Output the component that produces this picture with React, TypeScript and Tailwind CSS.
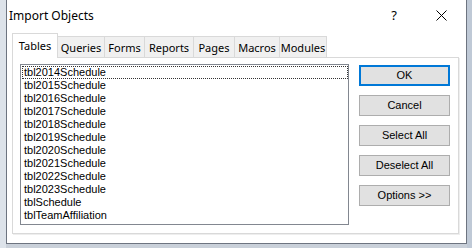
import React from 'react'

const tabs = ['Tables', 'Queries', 'Forms', 'Reports', 'Pages', 'Macros', 'Modules']
const tabWidths: Record<string, string> = {
  Queries: 'w-[48px]',
  Forms: 'w-[41px]',
  Reports: 'w-[50px]',
  Pages: 'w-[42px]',
  Macros: 'w-[46px]',
  Modules: 'w-[48px]',
}

const tables = [
  'tbl2014Schedule',
  'tbl2015Schedule',
  'tbl2016Schedule',
  'tbl2017Schedule',
  'tbl2018Schedule',
  'tbl2019Schedule',
  'tbl2020Schedule',
  'tbl2021Schedule',
  'tbl2022Schedule',
  'tbl2023Schedule',
  'tblSchedule',
  'tblTeamAffiliation',
]

const buttons = ['OK', 'Cancel', 'Select All', 'Deselect All', 'Options >>']

export default function App() {
  return (
    <div className="flex w-[472px] h-[248px] overflow-hidden bg-[#c9d0d9]">
      {/* strip of the window behind */}
      <div className="w-[6px] h-full bg-[#dde3ea]" />

      {/* dialog */}
      <div className="flex flex-col w-[461px] h-[244px] bg-white border-x border-b border-[#6d7480] font-['Noto_Sans',sans-serif] text-[#000]">
        {/* title bar */}
        <div className="flex items-center h-[31px] shrink-0">
          <span className="pl-[2px] text-[12px] leading-none">Import Objects</span>
          <span className="ml-auto mr-[39px] text-[13px] leading-none">?</span>
          <svg width="11" height="11" viewBox="0 0 11 11" className="mr-[19px]">
            <path d="M0.5 0.5 L10.5 10.5 M10.5 0.5 L0.5 10.5" stroke="#000" strokeWidth="1" />
          </svg>
        </div>

        <div className="pl-[5px]">
          {/* tab strip */}
          <div className="flex items-end h-[26px]">
            {tabs.map((t) =>
              t === 'Tables' ? (
                <div
                  key={t}
                  className="relative z-10 -mb-px flex items-center justify-center w-[46px] h-[25px] bg-white border-x border-t border-[#d9d9d9] text-[11px] leading-none pb-[2px]"
                >
                  {t}
                </div>
              ) : (
                <div
                  key={t}
                  className={`flex items-center justify-center ${tabWidths[t]} h-[21px] -ml-px first:ml-0 bg-[#f0f0f0] border border-b-0 border-[#d9d9d9] text-[11px] leading-none`}
                >
                  {t}
                </div>
              )
            )}
          </div>

          {/* tab panel */}
          <div className="flex w-[447px] h-[177px] border border-[#d9d9d9] pl-[7px] pt-[6px] shadow-[1px_1px_0_#eeeeee]">
            {/* list */}
            <div className="w-[329px] h-[161px] border border-[#828790] pt-[1px] pl-[1px] font-['Liberation_Sans',sans-serif] text-[11px]">
              {tables.map((name, i) => (
                <div
                  key={name}
                  className={`h-[13px] leading-[13px] pl-[2px] w-[326px] ${
                    i === 0 ? 'outline-1 outline-dotted outline-[#333] -outline-offset-1' : ''
                  }`}
                >
                  {name}
                </div>
              ))}
            </div>

            {/* buttons */}
            <div className="flex flex-col gap-[9px] ml-[10px] pt-[1px]">
              {buttons.map((b) => (
                <div
                  key={b}
                  className={`flex items-center justify-center w-[91px] h-[21px] bg-[#e1e1e1] font-['Liberation_Sans',sans-serif] text-[11px] leading-none ${
                    b === 'OK' ? 'border-2 border-[#0078d7]' : 'border border-[#adadad]'
                  }`}
                >
                  {b}
                </div>
              ))}
            </div>
          </div>
        </div>
      </div>

      {/* strip of the window behind, right */}
      <div className="flex-1 h-full bg-[#bfc9d6]" />
    </div>
  )
}
